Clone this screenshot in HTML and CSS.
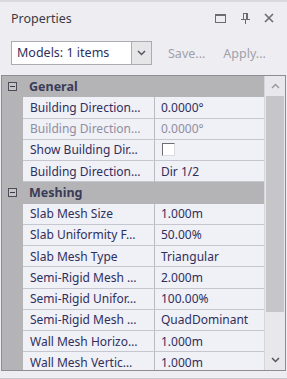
FILE: index.html
```html
<!DOCTYPE html>
<html lang="en">

<head>
    <meta charset="UTF-8">
    <meta name="viewport" content="width=device-width, initial-scale=1.0">
    <title>Properties</title>
    <link rel="stylesheet" href="styles.css">
</head>

<body>
    <div class="panel">
        <div class="titlebar">
            <span class="title">Properties</span>
            <div class="title-tools">
                <svg class="tool-restore" width="11" height="9" viewBox="0 0 11 9">
                    <rect x="0.5" y="0.5" width="10" height="8" fill="none" stroke="#6b6b70" />
                    <rect x="0" y="0" width="11" height="2" fill="#6b6b70" />
                </svg>
                <svg class="tool-pin" width="9" height="11" viewBox="0 0 9 11">
                    <rect x="2.5" y="0.5" width="4" height="6" fill="none" stroke="#6b6b70" />
                    <rect x="5" y="0" width="2" height="7" fill="#6b6b70" />
                    <rect x="0" y="6" width="9" height="1" fill="#6b6b70" />
                    <rect x="4" y="7" width="1" height="4" fill="#6b6b70" />
                </svg>
                <svg class="tool-close" width="10" height="10" viewBox="0 0 10 10">
                    <path d="M1 1 L9 9 M9 1 L1 9" stroke="#6b6b70" stroke-width="1.6" />
                </svg>
            </div>
        </div>

        <div class="toolbar">
            <div class="combo">
                <span class="combo-text">Models: 1 items</span>
                <span class="combo-btn">
                    <svg width="9" height="6" viewBox="0 0 9 6">
                        <polyline points="1,1 4.5,4.5 8,1" fill="none" stroke="#55555c" stroke-width="1.5" />
                    </svg>
                </span>
            </div>
            <span class="tool-link">Save...</span>
            <span class="tool-link apply">Apply...</span>
        </div>

        <div class="grid">
            <div class="rows">
                <div class="cat"><span class="toggle"></span>General</div>
                <div class="row"><span class="gutter"></span><span class="name">Building Direction…</span><span class="value">0.0000°</span></div>
                <div class="row disabled"><span class="gutter"></span><span class="name">Building Direction…</span><span class="value">0.0000°</span></div>
                <div class="row"><span class="gutter"></span><span class="name">Show Building Dir…</span><span class="value"><span class="check"></span></span></div>
                <div class="row"><span class="gutter"></span><span class="name">Building Direction…</span><span class="value">Dir 1/2</span></div>

                <div class="cat"><span class="toggle"></span>Meshing</div>
                <div class="row"><span class="gutter"></span><span class="name">Slab Mesh Size</span><span class="value">1.000m</span></div>
                <div class="row"><span class="gutter"></span><span class="name">Slab Uniformity F…</span><span class="value">50.00%</span></div>
                <div class="row"><span class="gutter"></span><span class="name">Slab Mesh Type</span><span class="value">Triangular</span></div>
                <div class="row"><span class="gutter"></span><span class="name">Semi-Rigid Mesh …</span><span class="value">2.000m</span></div>
                <div class="row"><span class="gutter"></span><span class="name">Semi-Rigid Unifor…</span><span class="value">100.00%</span></div>
                <div class="row"><span class="gutter"></span><span class="name">Semi-Rigid Mesh …</span><span class="value">QuadDominant</span></div>
                <div class="row"><span class="gutter"></span><span class="name">Wall Mesh Horizo…</span><span class="value">1.000m</span></div>
                <div class="row"><span class="gutter"></span><span class="name">Wall Mesh Vertic…</span><span class="value">1.000m</span></div>
            </div>
            <div class="scrollbar">
                <div class="scroll-btn">
                    <svg width="9" height="6" viewBox="0 0 9 6">
                        <polyline points="1,5 4.5,1.5 8,5" fill="none" stroke="#9a9aa0" stroke-width="1.5" />
                    </svg>
                </div>
                <div class="scroll-track">
                    <div class="scroll-thumb"></div>
                </div>
                <div class="scroll-btn">
                    <svg width="9" height="6" viewBox="0 0 9 6">
                        <polyline points="1,1 4.5,4.5 8,1" fill="none" stroke="#55555c" stroke-width="1.5" />
                    </svg>
                </div>
            </div>
        </div>
    </div>
</body>

</html>
```

FILE: styles.css
```css
body {
    margin: 0;
    padding: 0;
    background: #eeeef2;
    font-family: 'Noto Sans', 'DejaVu Sans', sans-serif;
    font-size: 12px;
    color: #2f2f5c;
    overflow: hidden;
}

.panel {
    height: 379px;
    box-sizing: border-box;
    border-top: 2px solid #d9d9de;
    border-bottom: 1px solid #c8c8cc;
}

.titlebar {
    display: flex;
    align-items: center;
    height: 24px;
    padding: 4px 13px 0 11px;
}

.title {
    flex: 1;
    font-size: 12.5px;
    color: #3a3a44;
}

.title-tools {
    display: flex;
    align-items: center;
}

.tool-pin {
    margin-left: 15px;
}

.tool-close {
    margin-left: 14px;
}

.toolbar {
    display: flex;
    align-items: center;
    margin-top: 11px;
    padding-left: 11px;
}

.combo {
    display: flex;
    width: 141px;
    height: 24px;
    box-sizing: border-box;
    border: 1px solid #acacb0;
    background: #ffffff;
}

.combo-text {
    flex: 1;
    padding-left: 5px;
    line-height: 22px;
    font-size: 12.5px;
    color: #2f2f5c;
}

.combo-btn {
    width: 19px;
    display: flex;
    align-items: center;
    justify-content: center;
    border-left: 1px solid #acacb0;
    background: #e6e6e8;
}

.tool-link {
    margin-left: 16px;
    font-size: 12.5px;
    color: #a0a0aa;
}

.tool-link.apply {
    margin-left: 18px;
}

.grid {
    display: flex;
    height: 296px;
    box-sizing: border-box;
    margin: 10px 1px 0 1px;
    border: 1px solid #8e8e92;
}

.rows {
    flex: 1;
    overflow: hidden;
}

.cat {
    display: flex;
    align-items: center;
    height: 21.25px;
    background: #b4b4b6;
    font-weight: bold;
    font-size: 12.5px;
    color: #3b3b58;
}

.toggle {
    position: relative;
    width: 9px;
    height: 9px;
    box-sizing: border-box;
    margin: 0 12px 0 6px;
    border: 1px solid #4c4c58;
    background: #c4c4c8;
}

.toggle::after {
    content: '';
    position: absolute;
    left: 1px;
    top: 3px;
    width: 5px;
    height: 1px;
    background: #3b3b48;
}

.row {
    display: grid;
    grid-template-columns: 21px 132px 1fr;
    height: 21.25px;
}

.gutter {
    background: #b4b4b6;
}

.name,
.value {
    display: flex;
    align-items: center;
    box-sizing: border-box;
    background: #f0f0f7;
    border-bottom: 1px solid #c6c6ce;
    white-space: nowrap;
    overflow: hidden;
    text-overflow: ellipsis;
}

.name {
    padding-left: 7px;
    border-right: 1px solid #babac2;
}

.value {
    padding-left: 6px;
}

.disabled .name,
.disabled .value {
    color: #8e8ea0;
}

.check {
    width: 13px;
    height: 13px;
    box-sizing: border-box;
    margin-left: 1px;
    background: #ffffff;
    border-top: 1px solid #6e6e74;
    border-left: 1px solid #6e6e74;
    border-right: 1px solid #dcdce0;
    border-bottom: 1px solid #dcdce0;
}

.scrollbar {
    width: 20px;
    display: flex;
    flex-direction: column;
    border-left: 1px solid #d6d6da;
    background: #e8e8ec;
}

.scroll-btn {
    height: 20px;
    display: flex;
    align-items: center;
    justify-content: center;
}

.scroll-track {
    flex: 1;
}

.scroll-thumb {
    height: 216px;
    margin: 0 1px;
    background: #c6c6c8;
}
```
